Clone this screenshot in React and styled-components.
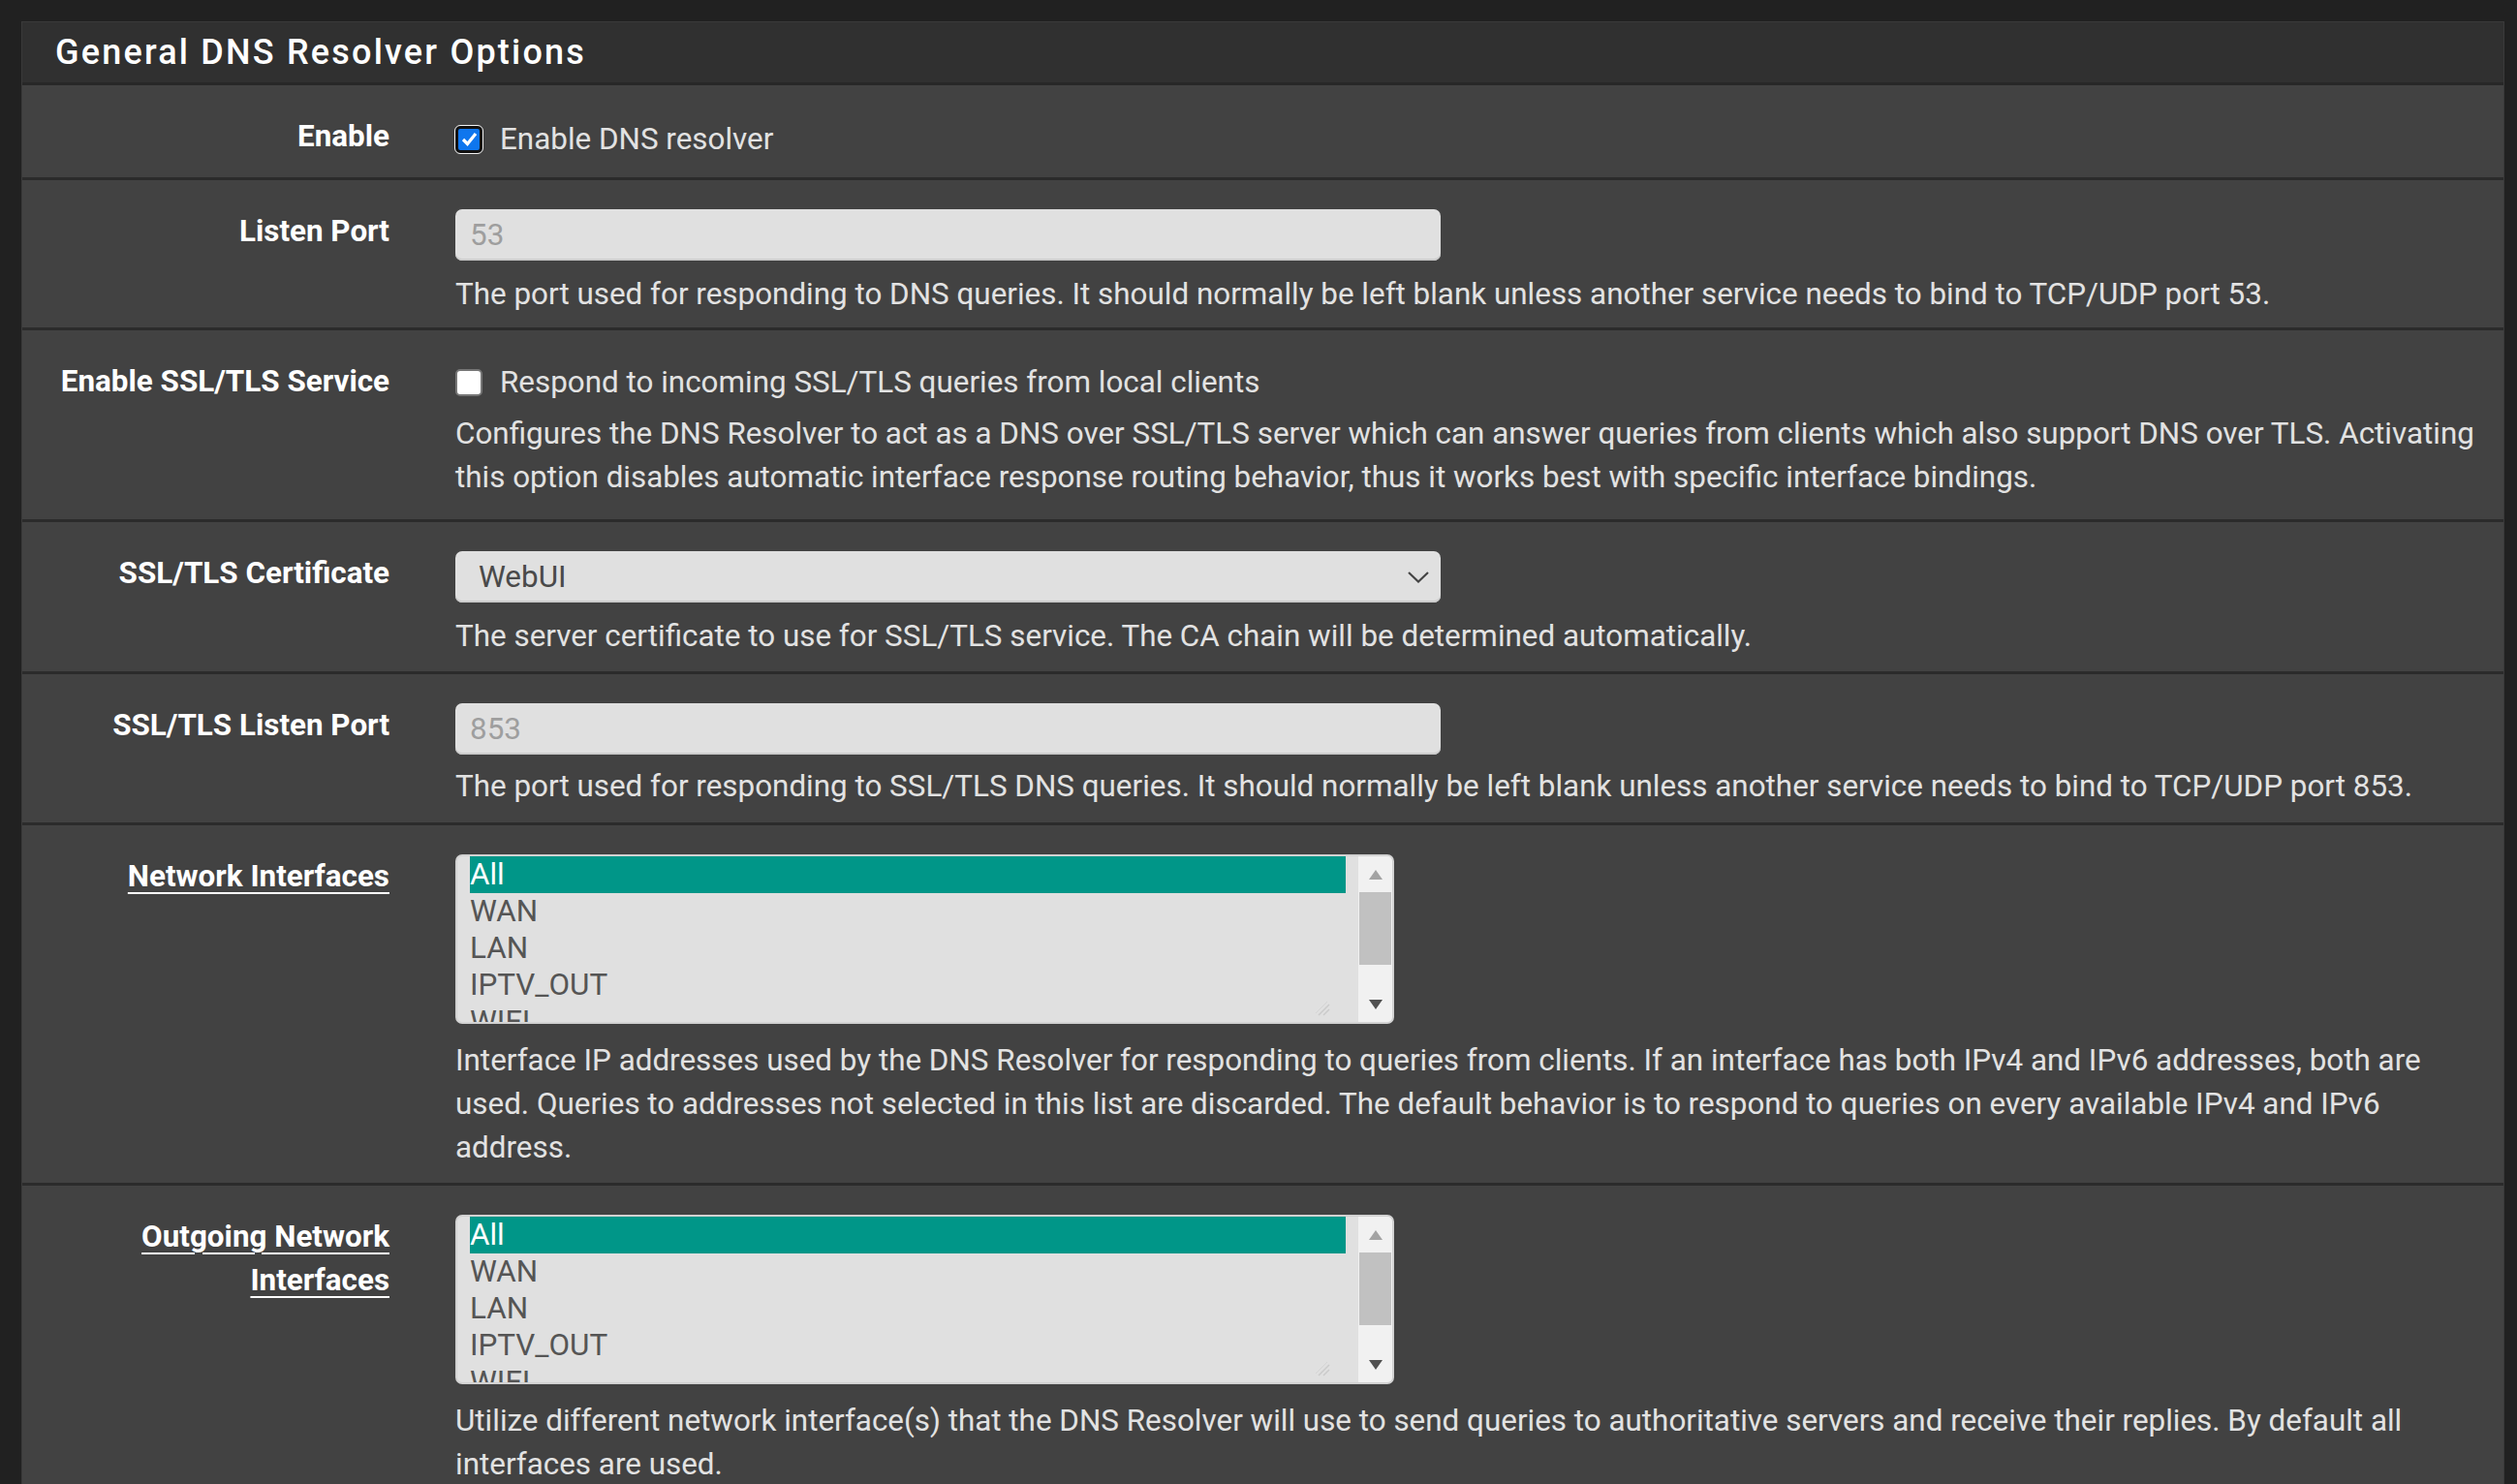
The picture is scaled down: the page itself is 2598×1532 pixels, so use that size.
import styled, { createGlobalStyle } from "styled-components"

const GlobalStyle = createGlobalStyle`
body {
  margin: 0;
  background: #212121;
  font-family: Roboto, "Liberation Sans", sans-serif;
}
`

const Page = styled.div`
padding: 22px 13px 0 22px;
`

const Panel = styled.div`
background: #424242;
border-left: 1px solid #3a3a3a;
border-right: 1px solid #3a3a3a;
`

const PanelHeader = styled.div`
height: 62px;
display: flex;
align-items: center;
padding-left: 34px;
background: #303030;
border-top: 1px solid #3a3a3a;
border-bottom: 3px solid #272727;
color: #fff;
font-size: 36px;
font-weight: 500;
letter-spacing: 2.2px;
`

const Row = styled.div`
display: grid;
grid-template-columns: 379px 1fr;
column-gap: 68px;
padding: 30px 22px ${(p) => p.$pb || 13}px 0;
border-bottom: 3px solid #2b2b2b;
`

const Label = styled.div`
text-align: right;
font-size: 31.4px;
line-height: 45px;
font-weight: 700;
color: #fff;
`

const LinkText = styled.span`
text-decoration: underline;
text-decoration-thickness: 2px;
text-underline-offset: 6px;
`

const Field = styled.div`
display: flex;
flex-direction: column;
align-items: flex-start;
`

const Help = styled.div`
margin-top: ${(p) => p.$mt || 12}px;
font-size: 31.4px;
line-height: 45px;
color: #e2e2e2;
`

const CheckLine = styled.label`
display: flex;
align-items: center;
gap: 18px;
padding: ${(p) => p.$pt || 0}px 0 ${(p) => p.$pb || 0}px;
font-size: 31.4px;
line-height: 45px;
color: #e2e2e2;
`

const Box = styled.span`
width: 28px;
height: 28px;
box-sizing: border-box;
border-radius: 5px;
display: flex;
align-items: center;
justify-content: center;
background: ${(p) => (p.$checked ? "#0f76ee" : "#fff")};
border: ${(p) => (p.$checked ? "3px solid #111" : "2px solid #767676")};
outline: ${(p) => (p.$checked ? "1.5px solid #f2f2f2" : "none")};
`

const TextInput = styled.input`
width: 1017px;
height: 53px;
box-sizing: border-box;
padding: 0 15px;
border: none;
border-radius: 7px;
background: #e0e0e0;
box-shadow: inset 0 -2px 0 #cbcbcb;
font-family: inherit;
font-size: 31.4px;
color: #555;
outline: none;
&::placeholder {
  color: #9e9e9e;
}
`

const SelectBox = styled.div`
width: 1017px;
height: 53px;
box-sizing: border-box;
padding: 0 12px 0 24px;
display: flex;
align-items: center;
justify-content: space-between;
border-radius: 7px;
background: #e0e0e0;
box-shadow: inset 0 -2px 0 #cbcbcb;
font-size: 31.4px;
color: #4a4a4a;
`

const ListBox = styled.div`
width: 969px;
height: 175px;
box-sizing: border-box;
display: flex;
border: 2px solid #d2d2d2;
border-radius: 7px;
background: #e0e0e0;
overflow: hidden;
`

const OptionsArea = styled.div`
flex: 1;
position: relative;
padding: 0 13px;
overflow: hidden;
`

const Option = styled.div`
height: 38px;
line-height: 38px;
font-size: 31.4px;
background: ${(p) => (p.$selected ? "#009688" : "transparent")};
color: ${(p) => (p.$selected ? "#fff" : "#555")};
`

const Grip = styled.svg`
position: absolute;
right: 29px;
bottom: 6px;
`

const ScrollTrack = styled.div`
width: 35px;
display: flex;
flex-direction: column;
align-items: center;
background: #f1f1f1;
`

const Arrow = styled.div`
height: 37px;
display: flex;
align-items: center;
justify-content: center;
`

const Thumb = styled.div`
width: 33px;
height: 75px;
background: #c1c1c1;
`

const Spacer = styled.div`
flex: 1;
`

const CheckMark = () => (
  <svg width="17" height="15" viewBox="0 0 17 15">
    <polyline points="2,8 6.5,12.5 15,2" fill="none" stroke="#fff" strokeWidth="3.2" />
  </svg>
)

const Check = ({ checked, children, pt, pb }) => (
  <CheckLine $pt={pt} $pb={pb}>
    <Box $checked={checked}>{checked && <CheckMark />}</Box>
    {children}
  </CheckLine>
)

const Interfaces = () => (
  <ListBox>
    <OptionsArea>
      {["All", "WAN", "LAN", "IPTV_OUT", "WIFI"].map((o, i) => (
        <Option key={o} $selected={i === 0}>{o}</Option>
      ))}
      <Grip width="16" height="16" viewBox="0 0 16 16">
        <line x1="15" y1="4" x2="4" y2="15" stroke="#cacaca" strokeWidth="1.5" />
        <line x1="15" y1="9" x2="9" y2="15" stroke="#cacaca" strokeWidth="1.5" />
        <line x1="13" y1="1" x2="1" y2="13" stroke="#d4d4d4" strokeWidth="1" />
      </Grip>
    </OptionsArea>
    <ScrollTrack>
      <Arrow>
        <svg width="14" height="10" viewBox="0 0 14 10">
          <polygon points="7,0 14,10 0,10" fill="#a3a3a3" />
        </svg>
      </Arrow>
      <Thumb />
      <Spacer />
      <Arrow>
        <svg width="14" height="10" viewBox="0 0 14 10">
          <polygon points="0,0 14,0 7,10" fill="#505050" />
        </svg>
      </Arrow>
    </ScrollTrack>
  </ListBox>
)

const App = () => {
  return (
    <Page>
      <GlobalStyle />
      <Panel>
        <PanelHeader>General DNS Resolver Options</PanelHeader>

        <Row $pb={12}>
          <Label>Enable</Label>
          <Field>
            <Check checked pt={3} pb={5}>Enable DNS resolver</Check>
          </Field>
        </Row>

        <Row $pb={12}>
          <Label>Listen Port</Label>
          <Field>
            <TextInput placeholder="53" readOnly />
            <Help>
              The port used for responding to DNS queries. It should normally be left blank unless another service needs to bind to TCP/UDP port 53.
            </Help>
          </Field>
        </Row>

        <Row $pb={21}>
          <Label>Enable SSL/TLS Service</Label>
          <Field>
            <Check pt={1}>Respond to incoming SSL/TLS queries from local clients</Check>
            <Help $mt={8}>
              Configures the DNS Resolver to act as a DNS over SSL/TLS server which can answer queries from clients which also support DNS over TLS. Activating this option disables automatic interface response routing behavior, thus it works best with specific interface bindings.
            </Help>
          </Field>
        </Row>

        <Row $pb={14}>
          <Label>SSL/TLS Certificate</Label>
          <Field>
            <SelectBox>
              WebUI
              <svg width="22" height="12" viewBox="0 0 22 12">
                <polyline points="1,1 11,10.5 21,1" fill="none" stroke="#444" strokeWidth="2.2" />
              </svg>
            </SelectBox>
            <Help>The server certificate to use for SSL/TLS service. The CA chain will be determined automatically.</Help>
          </Field>
        </Row>

        <Row $pb={15}>
          <Label>SSL/TLS Listen Port</Label>
          <Field>
            <TextInput placeholder="853" readOnly />
            <Help $mt={10}>
              The port used for responding to SSL/TLS DNS queries. It should normally be left blank unless another service needs to bind to TCP/UDP port 853.
            </Help>
          </Field>
        </Row>

        <Row $pb={14}>
          <Label><LinkText>Network Interfaces</LinkText></Label>
          <Field>
            <Interfaces />
            <Help $mt={15}>
              Interface IP addresses used by the DNS Resolver for responding to queries from clients. If an interface has both IPv4 and IPv6 addresses, both are used. Queries to addresses not selected in this list are discarded. The default behavior is to respond to queries on every available IPv4 and IPv6 address.
            </Help>
          </Field>
        </Row>

        <Row $pb={14}>
          <Label><LinkText>Outgoing Network Interfaces</LinkText></Label>
          <Field>
            <Interfaces />
            <Help $mt={15}>
              Utilize different network interface(s) that the DNS Resolver will use to send queries to authoritative servers and receive their replies. By default all interfaces are used.
            </Help>
          </Field>
        </Row>
      </Panel>
    </Page>
  )
}

export default App
